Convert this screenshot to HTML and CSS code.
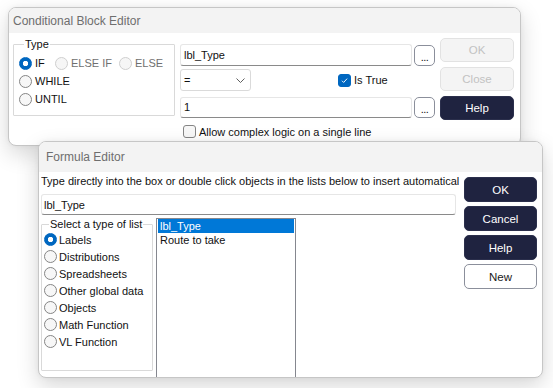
FILE: index.html
```html
<!DOCTYPE html>
<html>
<head>
<meta charset="utf-8">
<link rel="stylesheet" href="styles.css">
</head>
<body>
<div class="desk">
  <section class="win win-cbe">
    <header class="titlebar">Conditional Block Editor</header>
    <div class="cbe-body">
      <fieldset class="group type-group">
        <legend>Type</legend>
        <div class="radio-grid">
          <span class="radio checked"><span class="rb"></span>IF</span>
          <span class="radio disabled"><span class="rb"></span>ELSE IF</span>
          <span class="radio disabled"><span class="rb"></span>ELSE</span>
        </div>
        <span class="radio tall"><span class="rb"></span>WHILE</span>
        <span class="radio tall"><span class="rb"></span>UNTIL</span>
      </fieldset>
      <div class="cbe-fields">
        <div class="field-row row1">
          <div class="textbox">lbl_Type</div>
          <span class="dots">...</span>
        </div>
        <div class="field-row row2">
          <div class="select">=<svg class="chev" width="9" height="5" viewBox="0 0 9 5"><path d="M0.5 0.5 L4.5 4.5 L8.5 0.5" fill="none" stroke="#5f5f5f" stroke-width="1"/></svg></div>
          <span class="check checked"><span class="cb"><svg width="13" height="13" viewBox="0 0 13 13"><path d="M3.5 6.8 L5.5 8.8 L9.6 4.3" fill="none" stroke="#fff" stroke-width="1.1"/></svg></span>Is True</span>
        </div>
        <div class="field-row row3">
          <div class="textbox short">1</div>
          <span class="dots">...</span>
        </div>
        <span class="check allow"><span class="cb"></span>Allow complex logic on a single line</span>
      </div>
      <div class="btn-col btn-col-cbe">
        <span class="btn disabled">OK</span>
        <span class="btn disabled">Close</span>
        <span class="btn dark">Help</span>
      </div>
    </div>
  </section>

  <section class="win win-fe">
    <header class="titlebar">Formula Editor</header>
    <div class="fe-body">
      <div class="fe-main">
        <div class="hint">Type directly into the box or double click objects in the lists below to insert automatically</div>
        <div class="textbox formula">lbl_Type</div>
        <div class="fe-lists">
          <fieldset class="group list-group">
            <legend>Select a type of list</legend>
            <span class="radio small checked"><span class="rb"></span>Labels</span>
            <span class="radio small"><span class="rb"></span>Distributions</span>
            <span class="radio small"><span class="rb"></span>Spreadsheets</span>
            <span class="radio small"><span class="rb"></span>Other global data</span>
            <span class="radio small"><span class="rb"></span>Objects</span>
            <span class="radio small"><span class="rb"></span>Math Function</span>
            <span class="radio small"><span class="rb"></span>VL Function</span>
          </fieldset>
          <div class="listbox">
            <div class="item selected">lbl_Type</div>
            <div class="item">Route to take</div>
          </div>
        </div>
      </div>
      <div class="btn-col btn-col-fe">
        <span class="btn dark">OK</span>
        <span class="btn dark">Cancel</span>
        <span class="btn dark">Help</span>
        <span class="btn outline">New</span>
      </div>
    </div>
  </section>
</div>
</body>
</html>
```

FILE: styles.css
```css
* { box-sizing: border-box; }
html, body { margin: 0; padding: 0; background: #fff; }
body { font-family: "Liberation Sans", Arial, sans-serif; font-size: 11px; color: #111; }

.desk { position: relative; width: 553px; height: 388px; overflow: hidden; background: #fff; }

.win {
  position: absolute;
  border: 1px solid #c6c6c6;
  border-radius: 8px;
  background: #fff;
  box-shadow: 0 8px 22px rgba(0,0,0,0.16), 0 0 5px rgba(0,0,0,0.05);
  overflow: hidden;
  display: flex;
  flex-direction: column;
}
.win-cbe { left: 8px; top: 7px; width: 513px; height: 139px; }
.win-fe { left: 38px; top: 141px; width: 505px; height: 237px; }

.titlebar {
  flex: none;
  display: flex;
  align-items: center;
  background: #f3f3f3;
  color: #6e6e6e;
  font-size: 12px;
}
.win-cbe .titlebar { height: 25px; padding-left: 4px; }
.win-fe .titlebar { height: 30px; padding-left: 7px; }

/* ---------- Conditional Block Editor ---------- */
.cbe-body {
  display: flex;
  align-items: flex-start;
  gap: 5px;
  padding: 5px 4px 0 4px;
}

.group {
  margin: 0;
  border: 1px solid #d9d9d9;
  border-radius: 1px;
  min-width: 0;
}
.group legend { padding: 0 1px; line-height: 13px; margin-left: 5px; color: #111; }

.type-group { width: 162px; height: 78px; padding: 3px 5px 0 5px; display: flex; flex-direction: column; }
.radio-grid { display: grid; grid-template-columns: 36px 64px auto; }

.radio { display: flex; align-items: center; gap: 3px; height: 18px; white-space: nowrap; }
.radio.small { height: 17px; gap: 2px; }
.rb {
  flex: none;
  width: 13px; height: 13px;
  border-radius: 50%;
  border: 1px solid #858585;
  background: #f7f7f7;
}
.radio.checked .rb { border-color: #0067c0; background: radial-gradient(circle, #fff 0 2.4px, #0067c0 3px); }
.radio.disabled { color: #6f6f6f; }
.radio.disabled .rb { border-color: #cfcfcf; background: #f6f6f6; }

.cbe-fields { width: 255px; display: flex; flex-direction: column; padding-top: 6px; }
.field-row { display: flex; align-items: center; }
.row1 { gap: 2px; height: 22px; }
.row2 { margin-top: 3px; height: 22px; }
.row3 { margin-top: 5px; gap: 2px; height: 22px; }

.textbox {
  width: 232px; height: 22px;
  border: 1px solid #e6e6e6;
  border-bottom-color: #8a8a8a;
  border-radius: 3px;
  padding-left: 3px;
  display: flex; align-items: center;
  background: #fff;
}
.textbox.short { height: 21px; }

.dots {
  width: 21px; height: 21px;
  border: 1.5px solid #8b8f9b;
  border-radius: 5px;
  display: flex; align-items: flex-end; justify-content: center;
  padding-bottom: 3px;
  line-height: 10px;
  font-size: 11px;
  letter-spacing: -0.5px;
}

.select {
  width: 71px; height: 22px;
  border: 1px solid #dadada;
  border-radius: 3px;
  display: flex; align-items: center; justify-content: space-between;
  padding: 0 5px 0 3px;
}
.chev { display: block; }

.check { display: flex; align-items: center; gap: 3px; white-space: nowrap; }
.row2 .check { margin-left: 87px; }
.cb {
  flex: none;
  width: 13px; height: 13px;
  border: 1px solid #858585;
  border-radius: 3px;
  background: #f7f7f7;
  display: flex; align-items: center; justify-content: center;
}
.cb svg { display: block; }
.check.checked .cb { background: #0067c0; border-color: #0067c0; }
.check.allow { margin-top: 7px; margin-left: 3px; }

.btn-col { display: flex; flex-direction: column; }
.btn-col-cbe { width: 74px; gap: 5px; }
.btn-col-fe { width: 73px; gap: 4px; padding-top: 5px; }

.btn {
  display: flex; align-items: center; justify-content: center;
  height: 24px;
  border-radius: 5px;
  border: 1px solid transparent;
  font-size: 11.5px;
}
.btn-col-fe .btn { height: 25px; }
.btn.disabled { background: #f4f4f4; border-color: #e2e2e2; color: #c2c2c2; }
.btn.dark { background: #1f2340; border-color: #2b2f4c; color: #fff; }
.btn.outline { background: #fff; border: 1.5px solid #8b8f9b; color: #1a1a1a; }

/* ---------- Formula Editor ---------- */
.fe-body { flex: 1; display: flex; gap: 5px; padding: 0 5px 0 2px; }
.fe-main { width: 418px; display: flex; flex-direction: column; }
.hint { height: 16px; margin-top: 1px; line-height: 16px; white-space: nowrap; overflow: hidden; }
.textbox.formula { width: 415px; height: 21px; margin-top: 5px; padding-left: 2px; }

.fe-lists { display: flex; gap: 3px; margin-top: 3px; align-items: flex-start; }
.list-group { width: 112px; height: 153px; padding: 0 2px; display: flex; flex-direction: column; }
.list-group legend { margin-left: 5px; }

.listbox {
  width: 140px; height: 160px;
  border: 1px solid #85878f;
  padding: 0;
  background: #fff;
}
.item { height: 14px; line-height: 14px; padding-left: 2px; margin: 0 1px; white-space: nowrap; }
.item.selected { background: #0078d7; color: #fff; }
```
